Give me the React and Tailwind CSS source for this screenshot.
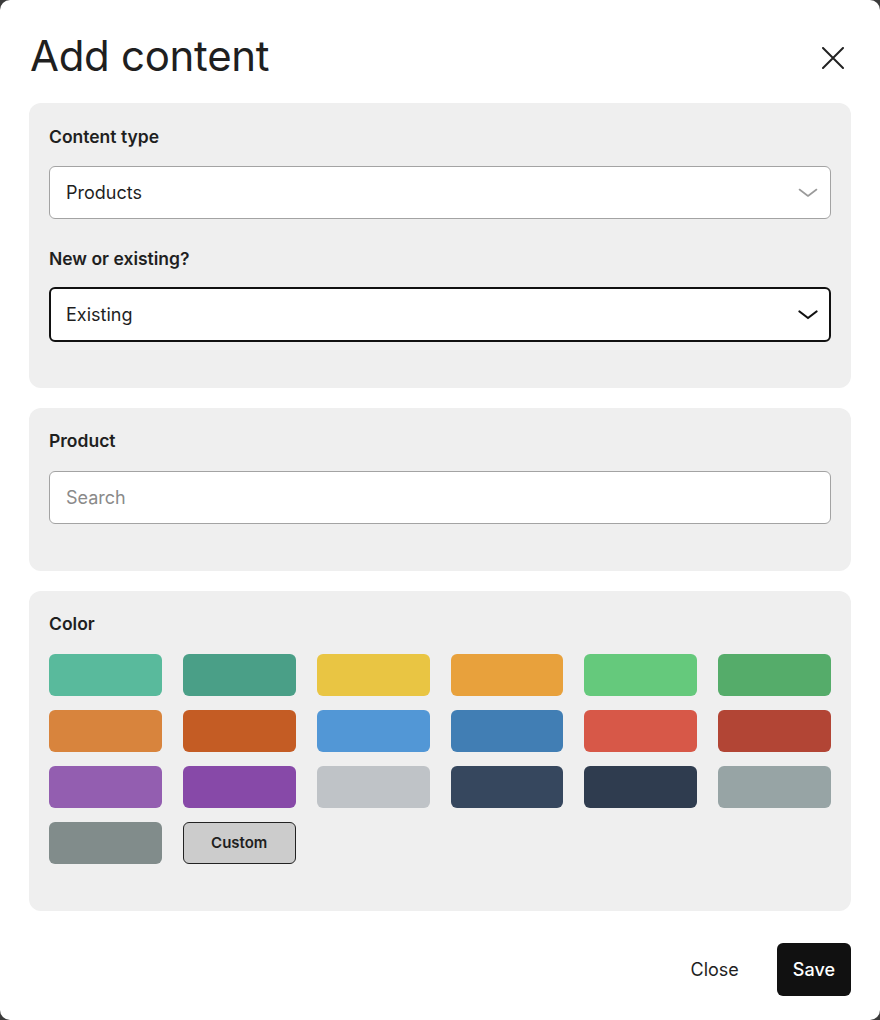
import React, { useState } from 'react';

const COLORS = [
    '#59BA9C', '#4A9F87', '#E9C543', '#E8A13C', '#65C97C', '#55AC6A',
    '#D8843D', '#C45C24', '#5297D6', '#417EB4', '#D75848', '#B24535',
    '#935EB0', '#8749A8', '#BFC3C7', '#36475E', '#2F3C4F', '#97A4A5',
    '#818C8B',
];

const Chevron = ({ dark }) => (
    <svg width="20" height="10" viewBox="0 0 20 10" fill="none">
        <path
            d="M1.5 1.5 L10 8 L18.5 1.5"
            stroke={dark ? '#111' : '#9a9a9a'}
            strokeWidth={dark ? 2.2 : 1.6}
            strokeLinecap="round"
            strokeLinejoin="round"
        />
    </svg>
);

const AddContent = () => {
    const [color, setColor] = useState(null);

    return (
        <div className="w-[880px] h-[1020px] bg-[#3b3b3b]" style={{ fontFamily: 'Inter, "Noto Sans", sans-serif' }}>
            <div className="h-full bg-white rounded-[10px] px-[29px] text-[#1f1f1f]">
                {/* Header */}
                <div className="flex items-start justify-between h-[103px] pt-[32px]">
                    <h1 className="text-[42px] font-normal tracking-[-0.3px] leading-[48px] pl-px">Add content</h1>
                    <button className="w-[24px] h-[24px] mr-[6px] mt-[14px] flex items-center justify-center">
                        <svg width="22" height="22" viewBox="0 0 22 22" fill="none">
                            <path d="M1 1 L21 21 M21 1 L1 21" stroke="#222" strokeWidth="2" strokeLinecap="round" />
                        </svg>
                    </button>
                </div>

                {/* Content type */}
                <div className="bg-[#efefef] rounded-[12px] px-[20px] pt-[24px] pb-[46px]">
                    <div className="text-[17.5px] font-semibold leading-[20px] mb-[19px]">Content type</div>
                    <div className="h-[53px] bg-white border border-[#a3a3a3] rounded-[6px] flex items-center justify-between pl-[16px] pr-[12px]">
                        <span className="text-[18px]">Products</span>
                        <Chevron />
                    </div>
                    <div className="text-[17.5px] font-semibold leading-[20px] mt-[30px] mb-[18px]">New or existing?</div>
                    <div className="h-[55px] bg-white border-2 border-[#111] rounded-[6px] flex items-center justify-between pl-[15px] pr-[11px]">
                        <span className="text-[18px]">Existing</span>
                        <Chevron dark />
                    </div>
                </div>

                {/* Product */}
                <div className="bg-[#efefef] rounded-[12px] px-[20px] pt-[23px] pb-[47px] mt-[20px]">
                    <div className="text-[17.5px] font-semibold leading-[20px] mb-[20px]">Product</div>
                    <input
                        placeholder="Search"
                        className="w-full h-[53px] bg-white border border-[#a3a3a3] rounded-[6px] pl-[16px] text-[18px] placeholder-[#8a8a8a] outline-none"
                    />
                </div>

                {/* Color */}
                <div className="bg-[#efefef] rounded-[12px] px-[20px] pt-[23px] pb-[47px] mt-[20px]">
                    <div className="text-[17.5px] font-semibold leading-[20px] mb-[20px]">Color</div>
                    <div className="grid grid-cols-6 gap-x-[21px] gap-y-[14px]">
                        {COLORS.map(c => (
                            <button
                                key={c}
                                onClick={() => setColor(c)}
                                className="h-[42px] rounded-[6px]"
                                style={{ backgroundColor: c }}
                            />
                        ))}
                        <button className="h-[42px] rounded-[6px] bg-[#cccccc] border border-[#222] text-[15px] font-semibold">
                            Custom
                        </button>
                    </div>
                </div>

                {/* Footer */}
                <div className="flex justify-end items-center gap-[38px] mt-[32px]">
                    <button className="text-[18px]">Close</button>
                    <button className="h-[53px] px-[16px] bg-[#111] text-white rounded-[6px] text-[18px] font-medium">Save</button>
                </div>
            </div>
        </div>
    );
};

export default function App() {
    return <AddContent />;
}
